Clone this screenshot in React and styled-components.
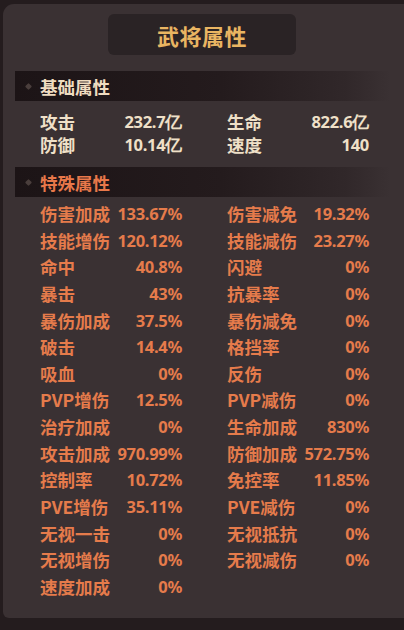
import React from 'react';
import styled, { createGlobalStyle } from 'styled-components';

const GlobalStyle = createGlobalStyle`
    html, body {
        margin: 0;
        padding: 0;
        background: #241c1e;
        font-family: "Noto Sans CJK SC", "Noto Sans", sans-serif;
    }
`;

const basic = [
    ['攻击', '232.7亿', '生命', '822.6亿'],
    ['防御', '10.14亿', '速度', '140'],
];

const special = [
    ['伤害加成', '133.67%', '伤害减免', '19.32%'],
    ['技能增伤', '120.12%', '技能减伤', '23.27%'],
    ['命中', '40.8%', '闪避', '0%'],
    ['暴击', '43%', '抗暴率', '0%'],
    ['暴伤加成', '37.5%', '暴伤减免', '0%'],
    ['破击', '14.4%', '格挡率', '0%'],
    ['吸血', '0%', '反伤', '0%'],
    ['PVP增伤', '12.5%', 'PVP减伤', '0%'],
    ['治疗加成', '0%', '生命加成', '830%'],
    ['攻击加成', '970.99%', '防御加成', '572.75%'],
    ['控制率', '10.72%', '免控率', '11.85%'],
    ['PVE增伤', '35.11%', 'PVE减伤', '0%'],
    ['无视一击', '0%', '无视抵抗', '0%'],
    ['无视增伤', '0%', '无视减伤', '0%'],
    ['速度加成', '0%'],
];

const Attributes = () => {
    return (
        <Page>
            <GlobalStyle />
            <Panel>
                <TitleBox>武将属性</TitleBox>
                <SectionHeader gap={16}>
                    <Bullet />
                    <SectionTitle color="#efdcc0">基础属性</SectionTitle>
                </SectionHeader>
                <Grid rowHeight={23} color="#efe0c8" top={9}>
                    {basic.map((r, i) => (
                        <Row key={i}>
                            <Stat><span>{r[0]}</span><span>{r[1]}</span></Stat>
                            <Stat><span>{r[2]}</span><span>{r[3]}</span></Stat>
                        </Row>
                    ))}
                </Grid>
                <SectionHeader gap={11}>
                    <Bullet />
                    <SectionTitle color="#e8784a">特殊属性</SectionTitle>
                </SectionHeader>
                <Grid rowHeight={26.64} color="#e57b4b" top={4}>
                    {special.map((r, i) => (
                        <Row key={i}>
                            <Stat><span>{r[0]}</span><span>{r[1]}</span></Stat>
                            {r[2] && <Stat><span>{r[2]}</span><span>{r[3]}</span></Stat>}
                        </Row>
                    ))}
                </Grid>
            </Panel>
        </Page>
    );
};

const Page = styled.div`
    width: 404px;
    height: 630px;
    padding-top: 4px;
    padding-left: 3px;
    box-sizing: border-box;
    overflow: hidden;
`;

const Panel = styled.div`
    height: 614px;
    background: #3a3133;
    border-radius: 11px 0 0 6px;
    padding-top: 10px;
    box-sizing: border-box;
    display: flex;
    flex-direction: column;
`;

const TitleBox = styled.div`
    align-self: center;
    width: 188px;
    height: 41px;
    background: #2a2325;
    border-radius: 6px;
    display: flex;
    align-items: center;
    justify-content: center;
    color: #e9b562;
    font-size: 22px;
    font-weight: 700;
    letter-spacing: 0.5px;
    margin-left: -3px;
`;

const SectionHeader = styled.div`
    margin: ${p => p.gap}px 14px 0 12px;
    height: 30px;
    display: flex;
    align-items: center;
    background: linear-gradient(90deg, #1c1416 0%, #241b1d 55%, rgba(42, 33, 35, 0.6) 88%, rgba(58, 49, 51, 0) 100%);
`;

const Bullet = styled.div`
    width: 5px;
    height: 5px;
    margin-left: 11px;
    background: #4a3e3c;
    transform: rotate(45deg);
    border-radius: 1px;
`;

const SectionTitle = styled.div`
    margin-left: 9px;
    color: ${p => p.color};
    font-size: 17.5px;
    font-weight: 700;
`;

const Grid = styled.div`
    padding: ${p => p.top}px 0 0 37px;
    color: ${p => p.color};
    font-size: 17.5px;
    font-weight: 700;
    line-height: ${p => p.rowHeight}px;
`;

const Row = styled.div`
    display: flex;
    gap: 45px;
`;

const Stat = styled.div`
    width: 142px;
    display: flex;
    justify-content: space-between;
    white-space: nowrap;
    span:last-child {
        font-family: "Noto Sans", sans-serif;
        font-size: 16.5px;
        letter-spacing: -0.3px;
    }
`;

export default Attributes;
